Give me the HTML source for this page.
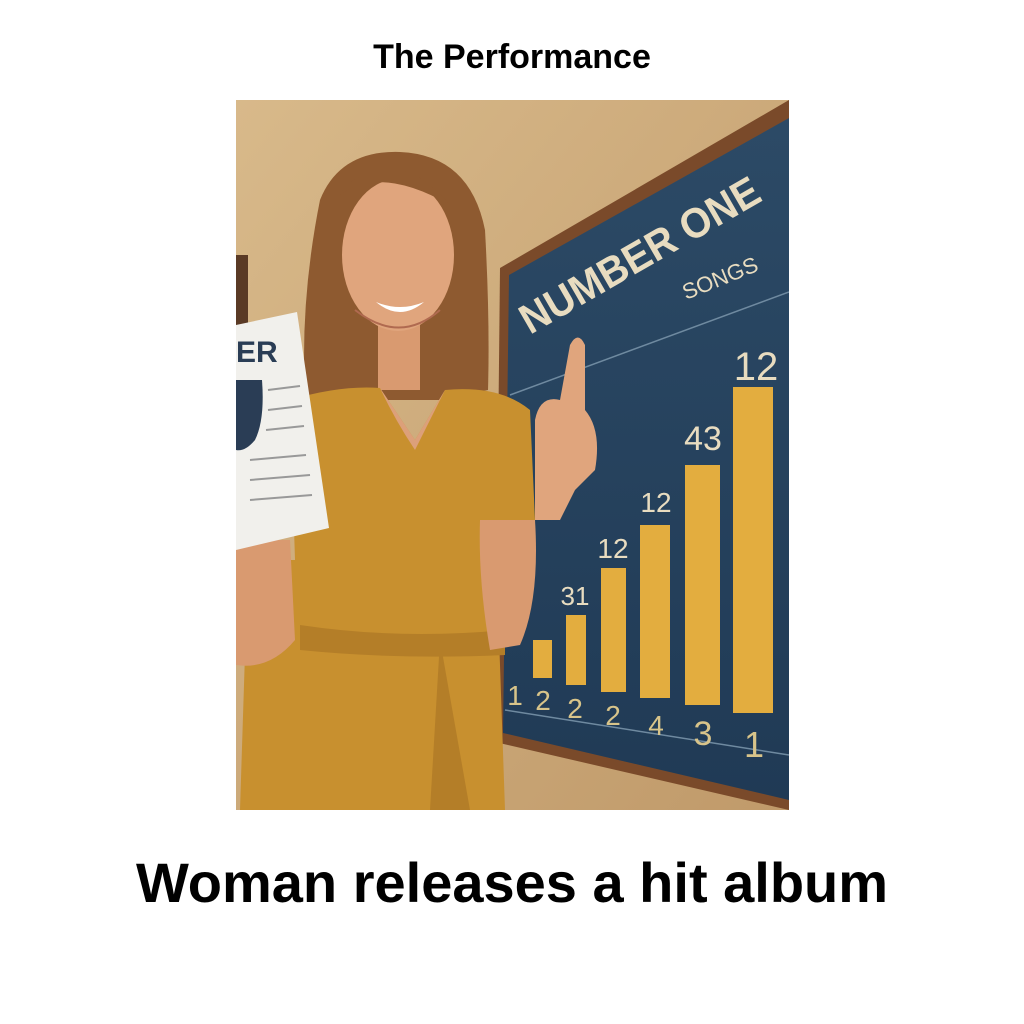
<!DOCTYPE html>
<html><head><style>
html,body{margin:0;padding:0;background:#fff;width:1024px;height:1024px;overflow:hidden}
.t{position:absolute;left:0;width:1024px;text-align:center;font-family:"Liberation Sans",sans-serif;font-weight:bold;color:#000}
</style></head><body>
<div class="t" style="top:38px;font-size:34px;">The Performance</div>
<svg style="position:absolute;left:236px;top:100px" width="553" height="710" viewBox="236 100 553 710">
<defs>
<linearGradient id="w" x1="0" y1="0" x2="1" y2="1"><stop offset="0" stop-color="#d8b98a"/><stop offset="1" stop-color="#c09a6a"/></linearGradient>
<linearGradient id="b" x1="0" y1="0" x2="0" y2="1"><stop offset="0" stop-color="#2c4a66"/><stop offset="1" stop-color="#203a55"/></linearGradient>
</defs>
<rect x="236" y="100" width="553" height="710" fill="url(#w)"/>
<rect x="236" y="255" width="12" height="70" fill="#5a3a25"/>
<polygon points="500,268 789,100 789,810 495,742" fill="#7a4a2a"/>
<polygon points="509,275 789,118 789,800 503,733" fill="url(#b)"/>
<line x1="510" y1="395" x2="789" y2="292" stroke="#6f8aa0" stroke-width="1.5"/>
<line x1="505" y1="710" x2="789" y2="755" stroke="#6f8aa0" stroke-width="1.5"/>
<text x="530" y="335" transform="rotate(-30 530 335)" textLength="270" lengthAdjust="spacingAndGlyphs" font-family="Liberation Sans,sans-serif" font-weight="bold" font-size="42" fill="#e8dcc0">NUMBER ONE</text>
<text x="686" y="300" transform="rotate(-22 686 300)" font-family="Liberation Sans,sans-serif" font-size="22" fill="#e8dcc0">SONGS</text>
<g fill="#e3ad3f">
<rect x="533" y="640" width="19" height="38"/><rect x="566" y="615" width="20" height="70"/>
<rect x="601" y="568" width="25" height="124"/><rect x="640" y="525" width="30" height="173"/>
<rect x="685" y="465" width="35" height="240"/><rect x="733" y="387" width="40" height="326"/>
</g>
<g font-family="Liberation Sans,sans-serif" font-size="28" fill="#e8dcc0" text-anchor="middle">
<text x="575" y="605" font-size="26">31</text><text x="613" y="558">12</text><text x="656" y="512">12</text><text x="703" y="450" font-size="34">43</text><text x="756" y="380" font-size="40">12</text>
<g fill="#d8c48a"><text x="515" y="705">1</text><text x="543" y="710">2</text><text x="575" y="718">2</text><text x="613" y="725">2</text><text x="656" y="735">4</text><text x="703" y="745" font-size="34">3</text><text x="754" y="757" font-size="36">1</text></g>
</g>
<path d="M320,200 Q340,150 400,152 Q470,155 485,230 Q490,320 488,390 L440,400 L350,400 L305,395 Q300,300 320,200Z" fill="#8e5a30"/>
<rect x="378" y="320" width="42" height="70" fill="#d99a70"/>
<ellipse cx="398" cy="255" rx="56" ry="76" fill="#e0a57d"/>
<path d="M355,310 Q400,345 440,310" fill="none" stroke="#b06a50" stroke-width="2"/>
<path d="M376,302 Q400,322 424,302 Q400,312 376,302Z" fill="#fff"/>
<path d="M340,195 Q380,165 450,205 Q420,170 395,170 Q350,172 340,195Z" fill="#8e5a30"/>
<path d="M290,400 Q340,385 380,388 L415,440 L445,390 Q500,385 530,410 L535,520 L495,520 L505,810 L240,810 L248,560 L295,560Z" fill="#c8902f"/>
<path d="M380,388 L415,440 L445,390 Q430,420 415,450 Q395,420 380,388Z" fill="#dca07a"/>
<path d="M300,625 Q400,640 505,630 L505,655 Q400,660 300,650Z" fill="#b47e28"/>
<path d="M440,640 L470,810 L430,810Z" fill="#b47e28"/>
<path d="M480,520 L535,520 Q540,600 520,645 L490,650 Q478,580 480,520Z" fill="#d99a70"/>
<path d="M535,420 Q540,395 560,400 L570,345 Q578,330 585,345 L585,410 Q602,430 595,470 L575,490 L560,520 L535,520 Z" fill="#e0a57d"/>
<path d="M236,540 L290,540 L295,640 Q270,670 236,665Z" fill="#d99a70"/>
<polygon points="236,325 297,312 329,528 236,550" fill="#f1f0ec"/>
<text x="236" y="362" font-family="Liberation Sans,sans-serif" font-weight="bold" font-size="30" fill="#2a3d55">ER</text>
<path d="M236,380 L262,380 Q265,420 255,440 Q245,452 236,450Z" fill="#2a3d55"/>
<g stroke="#999" stroke-width="2"><line x1="268" y1="390" x2="300" y2="386"/><line x1="268" y1="410" x2="302" y2="406"/><line x1="266" y1="430" x2="304" y2="426"/><line x1="250" y1="460" x2="306" y2="455"/><line x1="250" y1="480" x2="310" y2="475"/><line x1="250" y1="500" x2="312" y2="495"/></g>
</svg>
<div class="t" style="top:850px;font-size:56px;">Woman releases a hit album</div>
</body></html>
